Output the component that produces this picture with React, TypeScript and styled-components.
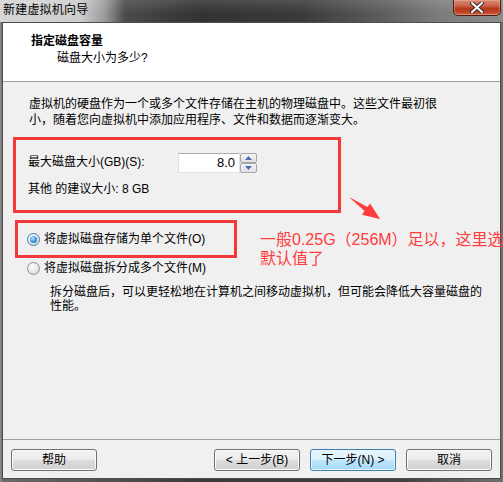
import React from "react";
import styled, { createGlobalStyle } from "styled-components";

const Global = createGlobalStyle`
  html, body { margin: 0; padding: 0; }
  body { background: #1e1e1e; }
  * { box-sizing: border-box; }
`;

const FONT = `"Liberation Sans", "Noto Sans CJK SC", sans-serif`;

const Frame = styled.div`
  position: relative;
  width: 503px;
  height: 482px;
  overflow: hidden;
  display: flex;
  flex-direction: column;
  font-family: ${FONT};
  font-size: 12px;
  color: #000;
  background: linear-gradient(to right, #8c8c8c 0px, #6a6a6a 3px, #3a3a3a 200px, #404040 400px, #707070 503px);
`;

const TitleBar = styled.div`
  height: 22px;
  flex: none;
  display: flex;
  align-items: flex-start;
  padding-left: 3px;
  background:
    linear-gradient(to bottom, rgba(255,255,255,0.12), rgba(255,255,255,0) 60%),
    linear-gradient(to right, #d6d6d6 0px, #cdcdcd 80px, #9a9a9a 105px, #4a4a4a 125px, #333 200px, #3a3a3a 300px, #5c5c5c 380px, #7c7c7c 440px, #8c8c8c 503px);
`;

const Title = styled.div`
  line-height: 21px;
  font-size: 12px;
  color: #000;
  letter-spacing: 0.2px;
`;

const CloseButton = styled.div`
  margin-left: auto;
  margin-right: 2px;
  width: 48px;
  height: 16px;
  border: 1px solid #4a1f16;
  border-top: none;
  border-radius: 0 0 5px 5px;
  background: linear-gradient(to bottom, #d98a76 0%, #c9624a 40%, #b8381a 55%, #bd4225 80%, #d06a50 100%);
  box-shadow: inset 0 0 0 1px rgba(255, 200, 180, 0.35);
  display: flex;
  align-items: center;
  justify-content: center;
`;

const Client = styled.div`
  flex: 1;
  margin: 0 2px 3px 2px;
  border: 1px solid #4c4c4c;
  background: #f0f0f0;
  display: flex;
  flex-direction: column;
`;

const Header = styled.div`
  flex: none;
  height: 59px;
  background: #fff;
  border-bottom: 1px solid #a0a0a0;
  padding: 10px 0 0 28px;
  line-height: 16px;
`;

const HeaderTitle = styled.div`
  font-weight: bold;
`;

const HeaderSub = styled.div`
  margin-top: 1px;
  padding-left: 26px;
`;

const Body = styled.div`
  flex: 1;
  padding: 14px 0 0 10px;
  line-height: 16px;
  display: flex;
  flex-direction: column;
  align-items: flex-start;
`;

const Intro = styled.div`
  padding-left: 16px;
  white-space: nowrap;
`;

const Highlight = styled.div<{ $w: number; $ml?: number }>`
  border: 3px solid #f23a3a;
  width: ${(p) => p.$w}px;
  margin-left: ${(p) => p.$ml ?? 0}px;
`;

const SizeBox = styled(Highlight)`
  margin-top: 9px;
  padding: 13px 0 13px 12px;
  display: flex;
  flex-direction: column;
  gap: 8px;
`;

const FieldRow = styled.div`
  display: flex;
  align-items: center;
  height: 20px;
`;

const FieldLabel = styled.span`
  width: 150px;
  margin-top: -3px;
`;

const Spin = styled.div`
  display: flex;
  height: 20px;
`;

const SpinInput = styled.div`
  width: 62px;
  height: 20px;
  background: #fff;
  border: 1px solid #e2e3ea;
  border-top-color: #abadb3;
  border-left-color: #dbdfe6;
  text-align: right;
  padding-right: 4px;
  line-height: 18px;
  font-size: 13px;
`;

const SpinButtons = styled.div`
  display: flex;
  flex-direction: column;
  width: 17px;
`;

const SpinBtn = styled.div`
  flex: 1;
  border: 1px solid #a6a6a6;
  border-radius: 2px;
  background: linear-gradient(to bottom, #f4f4f4, #e2e2e2);
  display: flex;
  align-items: center;
  justify-content: center;
`;

const Hint = styled.div`
  line-height: 16px;
`;

const OptionBox = styled(Highlight)`
  margin-top: 7px;
  height: 38px;
  padding-left: 9px;
  display: flex;
  align-items: center;
`;

const RadioRow = styled.label<{ $indent?: number }>`
  display: flex;
  align-items: center;
  gap: 4px;
  padding-left: ${(p) => p.$indent ?? 0}px;
  line-height: 16px;
  white-space: nowrap;
`;

const RadioCircle = styled.span<{ $on?: boolean }>`
  width: 13px;
  height: 13px;
  border-radius: 50%;
  border: 1px solid ${(p) => (p.$on ? "#3c7fb1" : "#8e8f8f")};
  background: radial-gradient(circle at 40% 35%, #ffffff 0%, #e6e6e6 60%, #c8c8c8 100%);
  display: flex;
  align-items: center;
  justify-content: center;
  flex: none;
`;

const RadioDot = styled.span`
  width: 7px;
  height: 7px;
  border-radius: 50%;
  background: radial-gradient(circle at 40% 35%, #b8e3ff 0%, #3593e0 55%, #1d5aa8 100%);
`;

const SecondOption = styled(RadioRow)`
  margin-top: 2px;
`;

const Description = styled.div`
  margin-top: 9px;
  padding-left: 37px;
  line-height: 14px;
  white-space: nowrap;
`;

const Footer = styled.div`
  flex: none;
  height: 39px;
  border-top: 1px solid #a0a0a0;
  padding: 9px 8px 0 8px;
  display: flex;
  gap: 10px;
`;

const Button = styled.div<{ $hot?: boolean }>`
  width: 86px;
  height: 22px;
  border: 1px solid ${(p) => (p.$hot ? "#3c7fb1" : "#707070")};
  border-radius: 3px;
  box-shadow: inset 0 0 0 1px ${(p) => (p.$hot ? "#e6f5fd" : "#fbfbfb")};
  background: ${(p) =>
    p.$hot
      ? "linear-gradient(to bottom, #eaf6fd 0%, #d9f0fc 50%, #bee6fd 50%, #a7d9f5 100%)"
      : "linear-gradient(to bottom, #f2f2f2 0%, #ebebeb 50%, #dddddd 50%, #cfcfcf 100%)"};
  display: flex;
  align-items: center;
  justify-content: center;
  line-height: 20px;
  white-space: nowrap;
`;

const Spacer = styled.div`
  flex: 1;
`;

const Annotation = styled.div`
  position: absolute;
  left: 260px;
  top: 230px;
  color: #ff3b3b;
  font-family: "Liberation Sans", "Noto Sans CJK SC", sans-serif;
  font-size: 16px;
  line-height: 19px;
  white-space: nowrap;
`;

const ArrowSvg = styled.svg`
  position: absolute;
  left: 345px;
  top: 190px;
`;

export default function App() {
  return (
    <>
      <Global />
      <Frame>
        <TitleBar>
          <Title>新建虚拟机向导</Title>
          <CloseButton>
            <svg width="14" height="11" viewBox="0 0 14 11">
              <path d="M2 1 L12 10 M12 1 L2 10" stroke="#3b2a28" strokeWidth="4" strokeLinecap="round" />
              <path d="M2 1 L12 10 M12 1 L2 10" stroke="#ffffff" strokeWidth="2" strokeLinecap="round" />
            </svg>
          </CloseButton>
        </TitleBar>
        <Client>
          <Header>
            <HeaderTitle>指定磁盘容量</HeaderTitle>
            <HeaderSub>磁盘大小为多少?</HeaderSub>
          </Header>
          <Body>
            <Intro>
              虚拟机的硬盘作为一个或多个文件存储在主机的物理磁盘中。这些文件最初很
              <br />
              小，随着您向虚拟机中添加应用程序、文件和数据而逐渐变大。
            </Intro>
            <SizeBox $w={328}>
              <FieldRow>
                <FieldLabel>最大磁盘大小(GB)(S):</FieldLabel>
                <Spin>
                  <SpinInput>8.0</SpinInput>
                  <SpinButtons>
                    <SpinBtn>
                      <svg width="7" height="4" viewBox="0 0 7 4">
                        <path d="M0 4 L3.5 0 L7 4 Z" fill="#4d6bb3" />
                      </svg>
                    </SpinBtn>
                    <SpinBtn>
                      <svg width="7" height="4" viewBox="0 0 7 4">
                        <path d="M0 0 L7 0 L3.5 4 Z" fill="#4d6bb3" />
                      </svg>
                    </SpinBtn>
                  </SpinButtons>
                </Spin>
              </FieldRow>
              <Hint>其他 的建议大小: 8 GB</Hint>
            </SizeBox>
            <OptionBox $w={222} $ml={2}>
              <RadioRow>
                <RadioCircle $on>
                  <RadioDot />
                </RadioCircle>
                将虚拟磁盘存储为单个文件(O)
              </RadioRow>
            </OptionBox>
            <SecondOption $indent={14}>
              <RadioCircle />
              将虚拟磁盘拆分成多个文件(M)
            </SecondOption>
            <Description>
              拆分磁盘后，可以更轻松地在计算机之间移动虚拟机，但可能会降低大容量磁盘的
              <br />
              性能。
            </Description>
          </Body>
          <Footer>
            <Button>帮助</Button>
            <Spacer />
            <Button>&lt; 上一步(B)</Button>
            <Button $hot>下一步(N) &gt;</Button>
            <Button>取消</Button>
          </Footer>
        </Client>
        <ArrowSvg width="40" height="34" viewBox="0 0 40 34">
          <polygon points="4,7 22.5,17 25.1,13.4 35,29 16.9,24.8 19.5,21.1" fill="#ff3b3b" />
        </ArrowSvg>
        <Annotation>
          一般0.25G（256M）足以，这里选
          <br />
          默认值了
        </Annotation>
      </Frame>
    </>
  );
}
